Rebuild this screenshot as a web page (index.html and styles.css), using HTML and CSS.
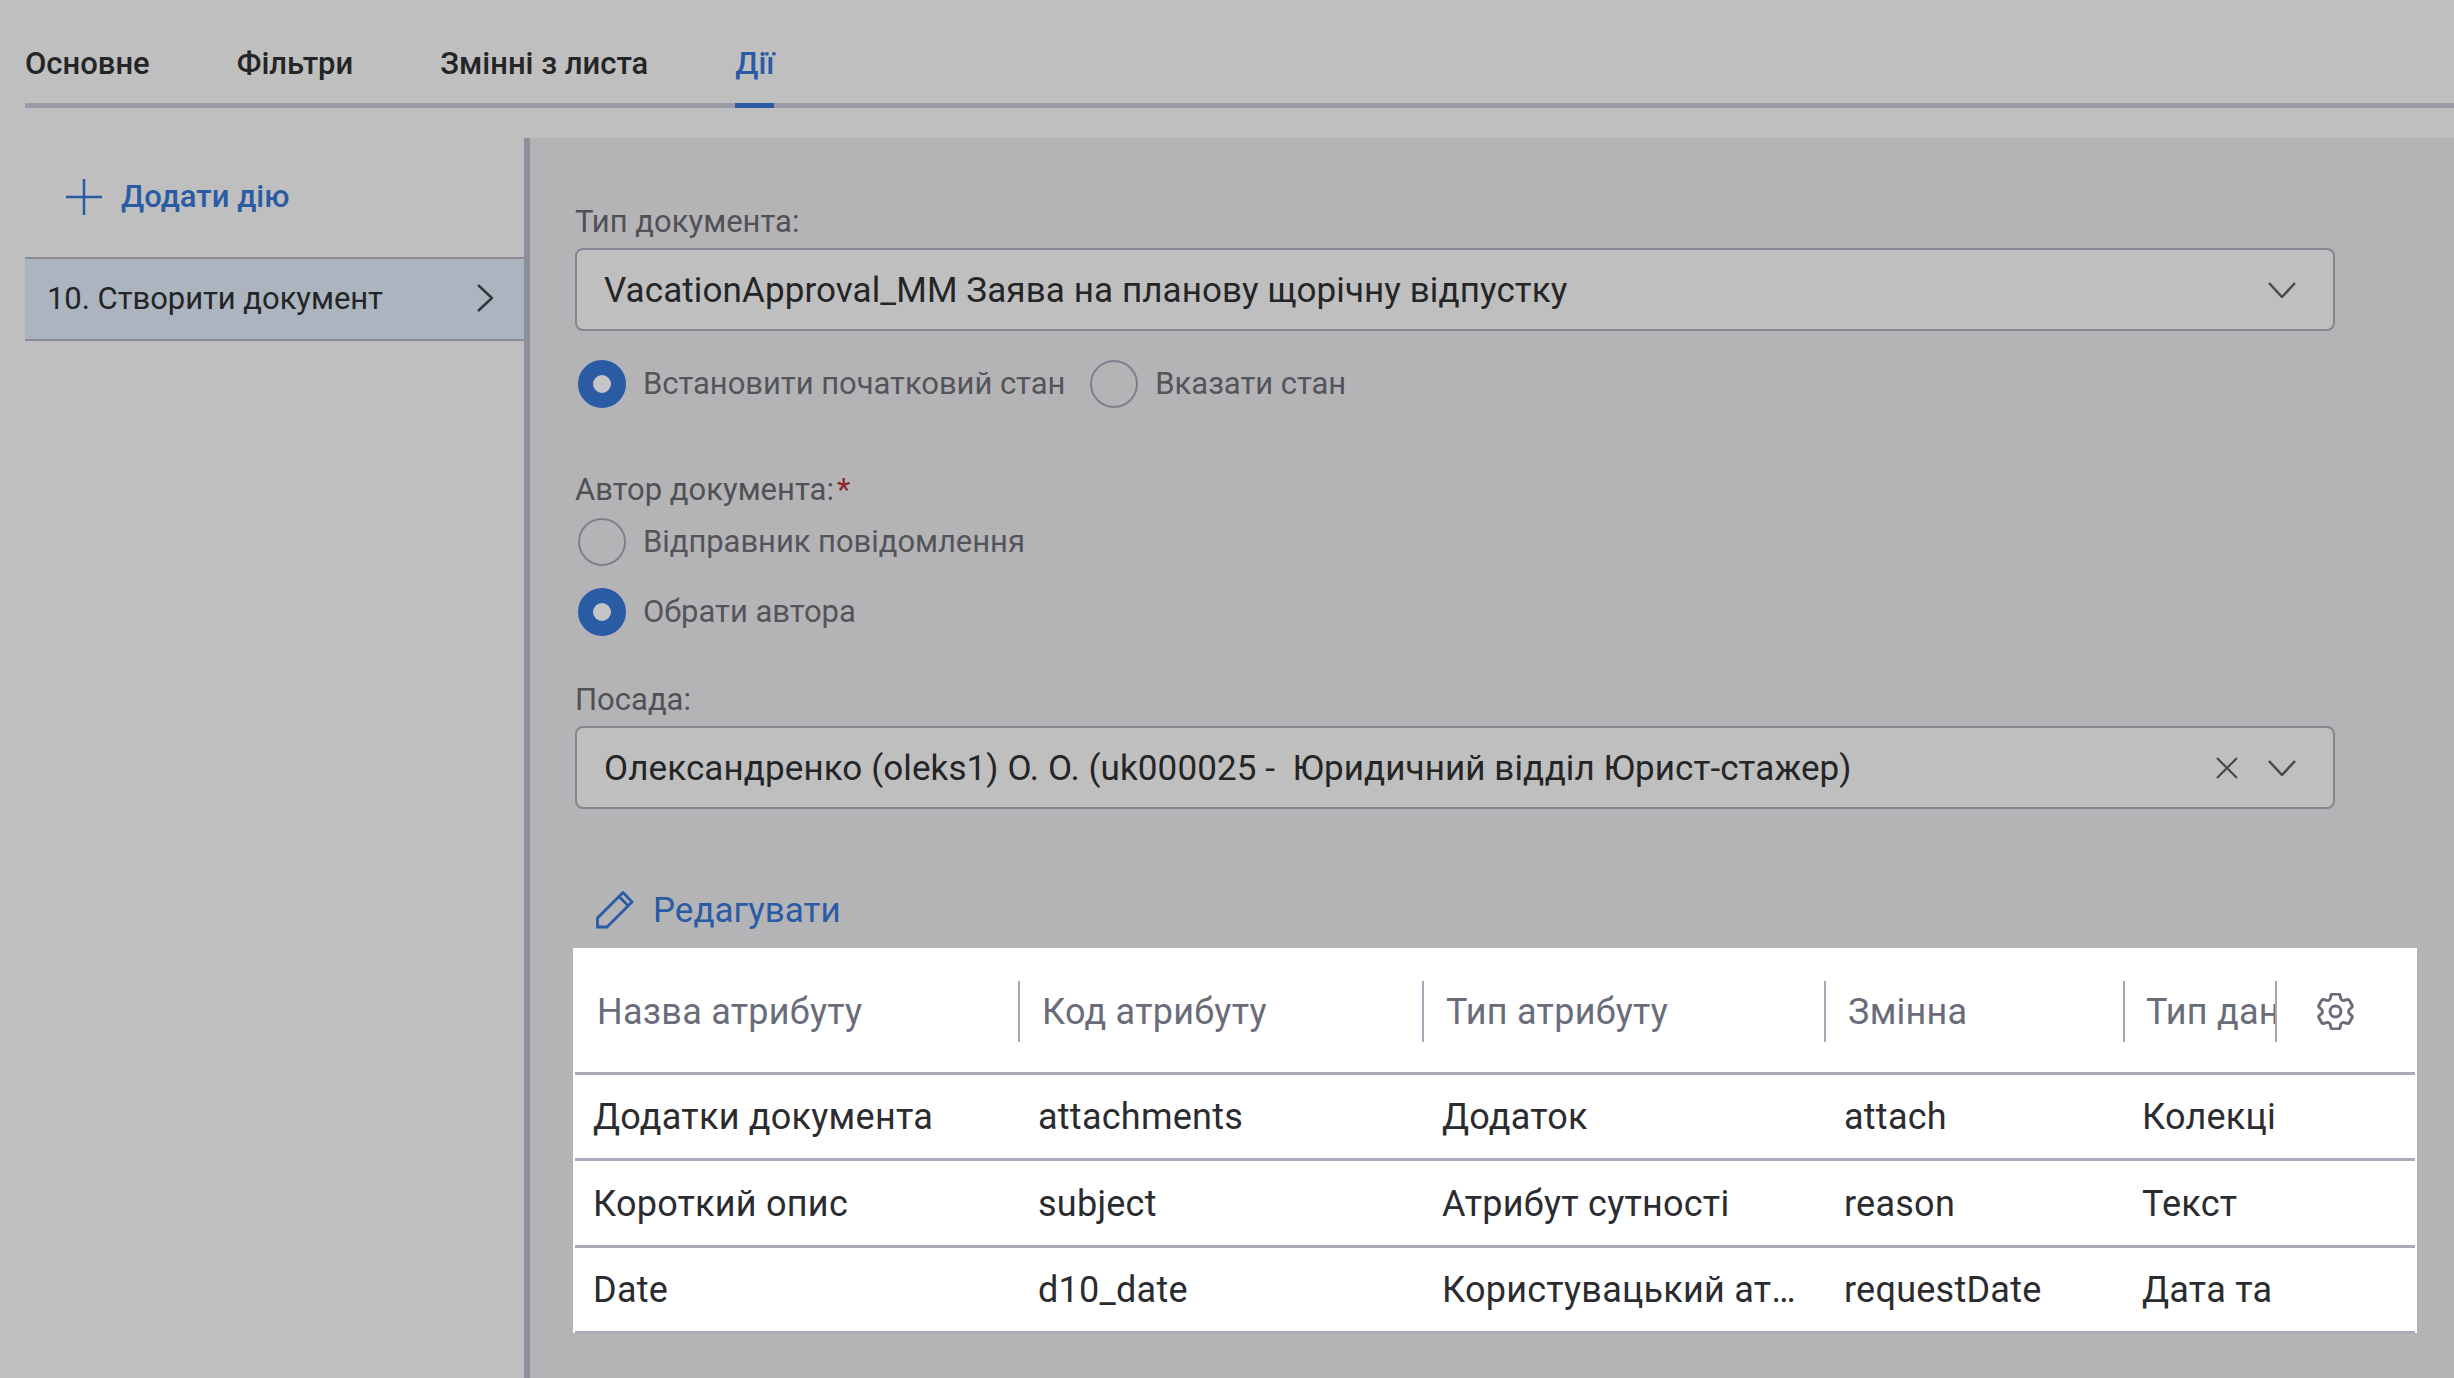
FILE: index.html
```html
<!DOCTYPE html>
<html>
<head>
    <title>Дії</title>
    <link rel="stylesheet" href="styles.css">
</head>
<body>
    <div class="tabs">
        <div class="tab">Основне</div>
        <div class="tab">Фільтри</div>
        <div class="tab">Змінні з листа</div>
        <div class="tab tab-active">Дії</div>
    </div>
    <div class="main">
        <div class="sidebar">
            <div class="add-action">
                <svg class="icon-plus" viewBox="0 0 36 36"><path d="M18 0V36M0 18H36"/></svg>
                <span>Додати дію</span>
            </div>
            <div class="action-item">
                <span>10. Створити документ</span>
                <svg class="icon-chevron-right" viewBox="0 0 16 28"><path d="M1 1L15 14L1 27"/></svg>
            </div>
        </div>
        <div class="panel">
            <div class="field-label first-label">Тип документа:</div>
            <div class="select">
                <span class="select-text">VacationApproval_MM Заява на планову щорічну відпустку</span>
                <svg class="icon-chevron-down" viewBox="0 0 28 16"><path d="M1 1L14 15L27 1"/></svg>
            </div>
            <div class="radio-row inline-radios">
                <span class="radio radio-on"></span><span class="radio-text">Встановити початковий стан</span>
                <span class="radio radio-second"></span><span class="radio-text">Вказати стан</span>
            </div>
            <div class="field-label author-label">Автор документа:<span class="star">*</span></div>
            <div class="radio-row sender-radio">
                <span class="radio"></span><span class="radio-text">Відправник повідомлення</span>
            </div>
            <div class="radio-row choose-radio">
                <span class="radio radio-on"></span><span class="radio-text">Обрати автора</span>
            </div>
            <div class="field-label position-label">Посада:</div>
            <div class="select">
                <span class="select-text">Олександренко (oleks1) О. О. (uk000025 -&nbsp; Юридичний відділ Юрист-стажер)</span>
                <svg class="icon-clear" viewBox="0 0 22 22"><path d="M1 1L21 21M21 1L1 21"/></svg>
                <svg class="icon-chevron-down" viewBox="0 0 28 16"><path d="M1 1L14 15L27 1"/></svg>
            </div>
            <div class="edit-link">
                <svg class="icon-pencil" viewBox="-1 -1 38 38"><path d="M0.500 26L26 0.500L35 10L10 35H0.500ZM22.500 5L31 13.500"/></svg>
                <span>Редагувати</span>
            </div>
            <div class="table">
                <div class="row head-row">
                    <div class="head-cell">Назва атрибуту</div>
                    <div class="head-cell">Код атрибуту</div>
                    <div class="head-cell">Тип атрибуту</div>
                    <div class="head-cell">Змінна</div>
                    <div class="head-cell">Тип даних</div>
                    <div class="gear-cell">
                        <svg class="icon-gear" viewBox="3 2.500 18 19"><path d="M9.594 3.940c.090-.542.560-.940 1.110-.940h2.593c.550 0 1.020.398 1.110.940l.213 1.281c.063.374.313.686.645.870.074.040.147.083.220.127.325.196.720.257 1.075.124l1.217-.456a1.125 1.125 0 0 1 1.370.490l1.296 2.247a1.125 1.125 0 0 1-.260 1.431l-1.003.827c-.293.241-.438.613-.430.992a7.723 7.723 0 0 1 0 .255c-.008.378.137.750.430.991l1.004.827c.424.350.534.955.260 1.430l-1.298 2.247a1.125 1.125 0 0 1-1.369.491l-1.217-.456c-.355-.133-.750-.072-1.076.124a6.470 6.470 0 0 1-.220.128c-.331.183-.581.495-.644.869l-.213 1.281c-.090.543-.560.940-1.110.940h-2.594c-.550 0-1.019-.398-1.110-.940l-.213-1.281c-.062-.374-.312-.686-.644-.870a6.520 6.520 0 0 1-.220-.127c-.325-.196-.720-.257-1.076-.124l-1.217.456a1.125 1.125 0 0 1-1.369-.490l-1.297-2.247a1.125 1.125 0 0 1 .260-1.431l1.004-.827c.292-.240.437-.613.430-.991a6.932 6.932 0 0 1 0-.255c.007-.380-.138-.751-.430-.992l-1.004-.827a1.125 1.125 0 0 1-.260-1.430l1.297-2.247a1.125 1.125 0 0 1 1.370-.491l1.216.456c.356.133.751.072 1.076-.124.072-.044.146-.086.220-.128.332-.183.582-.495.644-.869l.214-1.280Z"/><path d="M14.800 12a2.800 2.800 0 1 1-5.600 0 2.800 2.800 0 0 1 5.600 0Z"/></svg>
                    </div>
                </div>
                <div class="row body-row">
                    <div class="cell">Додатки документа</div>
                    <div class="cell">attachments</div>
                    <div class="cell">Додаток</div>
                    <div class="cell">attach</div>
                    <div class="cell cell-clip">Колекція</div>
                </div>
                <div class="row body-row">
                    <div class="cell">Короткий опис</div>
                    <div class="cell">subject</div>
                    <div class="cell">Атрибут сутності</div>
                    <div class="cell">reason</div>
                    <div class="cell cell-clip">Текст</div>
                </div>
                <div class="row body-row">
                    <div class="cell">Date</div>
                    <div class="cell">d10_date</div>
                    <div class="cell">Користувацький атрибут</div>
                    <div class="cell">requestDate</div>
                    <div class="cell cell-clip">Дата та час</div>
                </div>
            </div>
        </div>
    </div>
</body>
</html>
```

FILE: styles.css
```css
body {
    font-family: Roboto, "Noto Sans", sans-serif;
    background-color: #bfbfbf;
    margin: 0;
    height: 1378px;
    overflow: hidden;
    display: flex;
    flex-direction: column;
    color: #242527;
}
svg {
    fill: none;
    flex-shrink: 0;
}
.tabs {
    display: flex;
    gap: 87px;
    height: 103px;
    margin-left: 25px;
    border-bottom: 5px solid #9a9ba6;
}
.tab {
    position: relative;
    padding-top: 46px;
    height: 36px;
    line-height: 36px;
    font-size: 31px;
    font-weight: 500;
}
.tab-active {
    color: #2a5ba5;
}
.tab-active::after {
    content: "";
    position: absolute;
    left: 0;
    right: 0;
    top: 103px;
    height: 5px;
    background-color: #2a5ba5;
}
.main {
    display: flex;
    flex: 1;
    margin-top: 30px;
}
.sidebar {
    width: 499px;
    margin-left: 25px;
}
.add-action {
    display: flex;
    align-items: center;
    height: 36px;
    margin: 41px 0 0 41px;
    color: #2a5ba5;
    font-size: 31px;
    font-weight: 500;
    line-height: 36px;
}
.icon-plus {
    width: 36px;
    height: 36px;
    margin-right: 19px;
    stroke: #2a5ba5;
    stroke-width: 2.500;
}
.action-item {
    display: flex;
    align-items: center;
    justify-content: space-between;
    box-sizing: border-box;
    height: 84px;
    margin-top: 42px;
    padding: 0 31px 2px 22px;
    background-color: #abb4bf;
    border-top: 2px solid #8b8c97;
    border-bottom: 2px solid #8b8c97;
    font-size: 31px;
    letter-spacing: -0.05px;
}
.icon-chevron-right {
    width: 16px;
    height: 28px;
    stroke: #35363a;
    stroke-width: 2.500;
}
.panel {
    flex: 1;
    background-color: #b4b4b6;
    border-left: 6px solid #8e8f9b;
    padding-left: 45px;
}
.field-label {
    height: 36px;
    line-height: 36px;
    font-size: 31px;
    color: #505155;
}
.first-label {
    margin-top: 66px;
}
.author-label {
    margin-top: 64px;
}
.position-label {
    margin-top: 46px;
}
.star {
    color: #8e2430;
    margin-left: 3px;
}
.select {
    display: flex;
    align-items: center;
    box-sizing: border-box;
    width: 1760px;
    height: 83px;
    margin-top: 8px;
    padding: 0 37px 0 27px;
    background-color: #bfbfbf;
    border: 2px solid #84858f;
    border-radius: 8px;
}
.select-text {
    flex: 1;
    padding-top: 2px;
    font-size: 35px;
    letter-spacing: 0.1px;
    white-space: nowrap;
}
.icon-chevron-down {
    width: 28px;
    height: 16px;
    stroke: #4a4b4e;
    stroke-width: 2.500;
}
.icon-clear {
    width: 22px;
    height: 22px;
    margin-right: 30px;
    stroke: #4a4b4e;
    stroke-width: 2.200;
}
.radio-row {
    display: flex;
    align-items: center;
    height: 48px;
    margin-left: 3px;
}
.inline-radios {
    margin-top: 29px;
}
.sender-radio {
    margin-top: 10px;
}
.choose-radio {
    margin-top: 22px;
}
.radio {
    box-sizing: border-box;
    width: 48px;
    height: 48px;
    margin-right: 17px;
    border: 2px solid #7f808b;
    border-radius: 50%;
}
.radio-on {
    border: 15px solid #2a5ba5;
    background-color: #c4c5c6;
}
.radio-second {
    margin-left: 25px;
}
.radio-text {
    padding-bottom: 2px;
    font-size: 31px;
    letter-spacing: -0.05px;
    color: #54555a;
}
.edit-link {
    display: flex;
    align-items: center;
    height: 38px;
    margin: 82px 0 0 21px;
    color: #2a5ba5;
    font-size: 35px;
}
.icon-pencil {
    width: 38px;
    height: 38px;
    margin-right: 19px;
    stroke: #2a5ba5;
    stroke-width: 2.800;
}
.table {
    box-sizing: border-box;
    width: 1844px;
    height: 385px;
    margin: 19px 0 0 -2px;
    padding: 0 2px;
    background-color: #fff;
}
.row {
    display: grid;
    grid-template-columns: 445px 404px 402px 299px 152px 1fr;
    border-bottom: 3px solid #a9aaba;
    box-sizing: border-box;
}
.head-row {
    height: 127px;
    padding-top: 33px;
    align-items: start;
}
.body-row {
    height: 86px;
    align-items: center;
}
.body-row:nth-child(3) {
    height: 87px;
}
.head-cell {
    box-sizing: border-box;
    height: 61px;
    line-height: 62px;
    padding-left: 22px;
    border-right: 2px solid #a4a7b5;
    color: #6a6d79;
    font-size: 36px;
    letter-spacing: 0.25px;
    overflow: hidden;
    white-space: nowrap;
}
.head-cell:nth-child(5) {
    padding-left: 21px;
}
.gear-cell {
    display: flex;
    align-items: center;
    height: 61px;
    padding-left: 40px;
}
.icon-gear {
    width: 37px;
    height: 37px;
    stroke: #6a6d79;
    stroke-width: 1.500;
}
.cell {
    box-sizing: border-box;
    padding: 1px 14px 0 18px;
    color: #2b2c30;
    font-size: 36px;
    letter-spacing: 0.25px;
    white-space: nowrap;
    overflow: hidden;
    text-overflow: ellipsis;
}
.cell-clip {
    padding-left: 17px;
    padding-right: 0;
    text-overflow: clip;
}
```
